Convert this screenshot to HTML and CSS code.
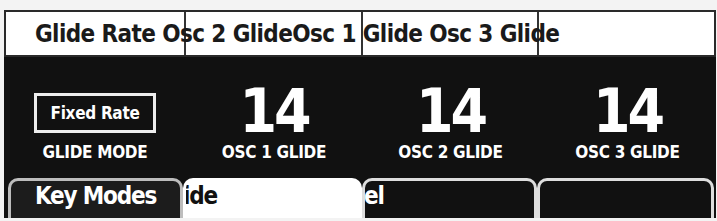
FILE: index.html
```html
<!DOCTYPE html>
<html>
<head>
<meta charset="utf-8">
<link rel="stylesheet" href="styles.css">
</head>
<body>
<div class="panel">
  <div class="header">
    <div class="hcell c1"></div>
    <div class="hcell c2"></div>
    <div class="hcell c3"></div>
    <div class="hcell c4"></div>
    <div class="htext">Glide Rate Osc 2 GlideOsc 1 Glide Osc 3 Glide</div>
  </div>
  <div class="controls">
    <div class="col">
      <div class="mode">Fixed Rate</div>
      <div class="label">GLIDE MODE</div>
    </div>
    <div class="col">
      <div class="value">14</div>
      <div class="label">OSC 1 GLIDE</div>
    </div>
    <div class="col">
      <div class="value">14</div>
      <div class="label">OSC 2 GLIDE</div>
    </div>
    <div class="col">
      <div class="value">14</div>
      <div class="label">OSC 3 GLIDE</div>
    </div>
  </div>
  <div class="tabs">
    <div class="tab tab-active">Key Modes</div>
    <div class="tab tab-light">ide</div>
    <div class="tab tab-dark">el</div>
    <div class="tab tab-dark"></div>
  </div>
</div>
</body>
</html>
```
FILE: styles.css
```css
html, body {
  margin: 0;
  padding: 0;
  background: #f3f3f3;
}
body {
  width: 717px;
  height: 221px;
  overflow: hidden;
  font-family: "DejaVu Sans Condensed", "DejaVu Sans", sans-serif;
  font-weight: bold;
}
.panel {
  margin: 10px 0 0 4px;
  width: 712px;
  background: #111;
}
.header {
  display: grid;
  grid-template-columns: 178px 177px 176px 1fr;
  grid-template-rows: 43px;
  height: 47px;
  box-sizing: border-box;
  border: 2px solid #2a2a2a;
  background: #fff;
}
.hcell {
  grid-row: 1;
  border-left: 2px solid #333;
}
.c1 { grid-column: 1; border-left: none; }
.c2 { grid-column: 2; }
.c3 { grid-column: 3; }
.c4 { grid-column: 4; }
.htext {
  grid-row: 1;
  grid-column: 1 / -1;
  padding-left: 29px;
  font-size: 24px;
  line-height: 45px;
  height: 43px;
  color: #1a1a1a;
  white-space: nowrap;
  letter-spacing: -0.6px;
}
.controls {
  display: grid;
  grid-template-columns: 182px 176px 177px 1fr;
  height: 121px;
  color: #fff;
}
.col {
  display: flex;
  flex-direction: column;
  align-items: center;
  justify-content: flex-end;
  padding-bottom: 16px;
}
.mode {
  width: 122px;
  height: 40px;
  box-sizing: border-box;
  border: 3px solid #eee;
  display: flex;
  align-items: center;
  justify-content: center;
  font-size: 17px;
  letter-spacing: -0.3px;
  margin-bottom: 9px;
}
.value {
  font-size: 60px;
  line-height: 52px;
  letter-spacing: -3px;
  margin-bottom: 5px;
}
.label {
  font-size: 17px;
  line-height: 20px;
  letter-spacing: -0.3px;
}
.tabs {
  display: grid;
  grid-template-columns: 175px 179px 175px 1fr;
  height: 40px;
  padding: 0 2px 0 4px;
}
.tab {
  box-sizing: border-box;
  border: 3px solid #ddd;
  border-bottom: none;
  border-radius: 10px 10px 0 0;
  font-size: 24px;
  line-height: 31px;
  letter-spacing: -1.2px;
  white-space: nowrap;
  overflow: hidden;
}
.tab-active {
  background: #1c1c1c;
  border-color: #bdbdbd;
  color: #fff;
  padding-left: 24px;
}
.tab-light {
  background: #fff;
  border-color: #fff;
  color: #111;
  text-indent: -3px;
}
.tab-dark {
  background: #111;
  color: #fff;
  text-indent: -1px;
}
```
